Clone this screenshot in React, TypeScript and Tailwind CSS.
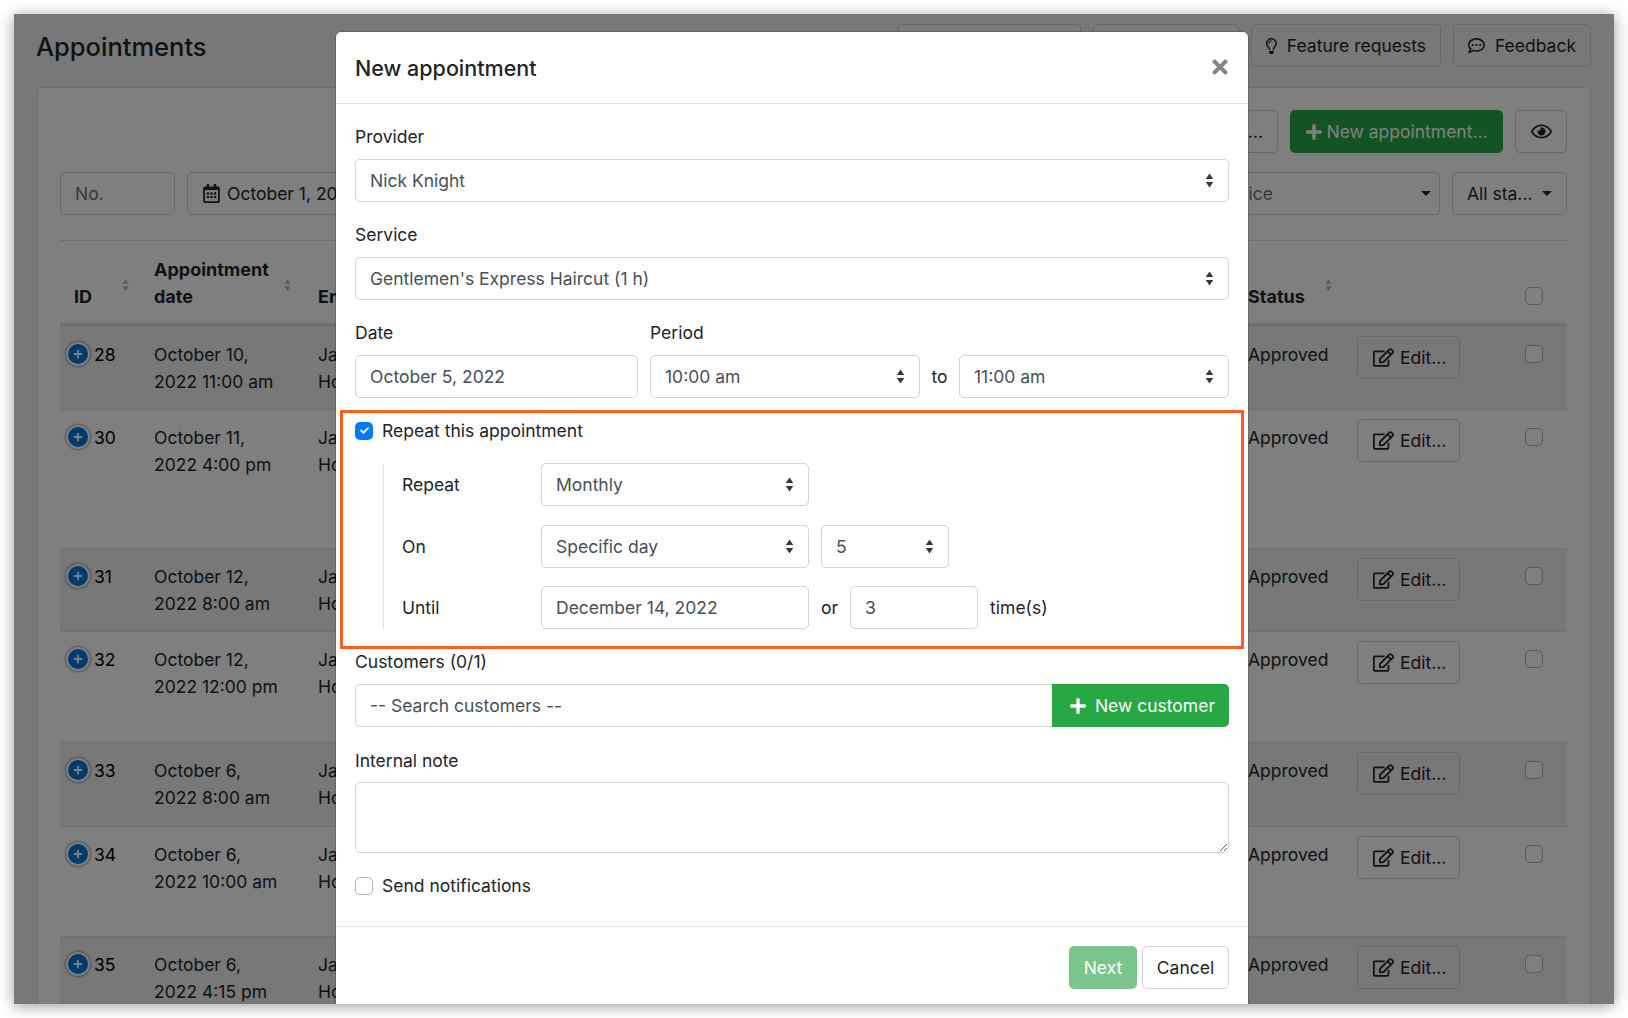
import { FaCheck, FaPlus, FaRegCalendarAlt, FaRegCommentDots, FaRegEdit, FaRegEye, FaRegLightbulb, FaTimes } from "react-icons/fa";

const rows = [
  { id: 28, l1: "October 10,", l2: "2022 11:00 am", h: "h-[83px]", striped: true },
  { id: 30, l1: "October 11,", l2: "2022 4:00 pm", h: "h-[139px]", striped: false },
  { id: 31, l1: "October 12,", l2: "2022 8:00 am", h: "h-[83px]", striped: true },
  { id: 32, l1: "October 12,", l2: "2022 12:00 pm", h: "h-[111px]", striped: false },
  { id: 33, l1: "October 6,", l2: "2022 8:00 am", h: "h-[84px]", striped: true },
  { id: 34, l1: "October 6,", l2: "2022 10:00 am", h: "h-[110px]", striped: false },
  { id: 35, l1: "October 6,", l2: "2022 4:15 pm", h: "h-[84px]", striped: true },
];

const Updown = () => (
  <svg viewBox="0 0 8 14" className="w-[9px] h-[15px] shrink-0 fill-[#343a40]">
    <path d="M4 0.5 7.5 5.5H0.5Z M4 13.5 0.5 8.5H7.5Z" />
  </svg>
);

const SortArrows = () => (
  <svg viewBox="0 0 8 14" className="w-[7px] h-[14px] fill-[#b5b5b5]">
    <path d="M4 0.5 7.5 5.5H0.5Z M4 13.5 0.5 8.5H7.5Z" />
  </svg>
);

const Caret = () => <span className="w-0 h-0 border-x-[5px] border-t-[5px] border-x-transparent border-t-[#212529]" />;

const Box = ({ children, className = "" }: { children: React.ReactNode; className?: string }) => (
  <div className={`h-[43px] shrink-0 flex items-center border border-[#ced4da] rounded-[5px] px-[14px] text-[#495057] bg-white ${className}`}>
    {children}
  </div>
);

const Select = ({ value, className = "" }: { value: string; className?: string }) => (
  <Box className={`justify-between ${className}`}>
    <span>{value}</span>
    <Updown />
  </Box>
);

const Label = ({ children }: { children: React.ReactNode }) => (
  <div className="h-[27px] leading-[27px] mb-[9px] text-[#212529]">{children}</div>
);

const PageButton = ({ children, className = "" }: { children: React.ReactNode; className?: string }) => (
  <div className={`h-[43px] shrink-0 flex items-center whitespace-nowrap rounded-[5px] border border-[#ced4da] px-[14px] text-[#212529] ${className}`}>
    {children}
  </div>
);

const CheckOff = ({ className = "" }: { className?: string }) => (
  <span className={`block w-[18px] h-[18px] shrink-0 rounded-[5px] border border-[#adb5bd] bg-white ${className}`} />
);

export default function App() {
  return (
    <div className="w-[1628px] h-[1018px] bg-white p-[14px] overflow-hidden text-[17.5px] leading-[27px] [font-family:Inter,'Liberation_Sans',sans-serif]">
      <div className="relative w-[1600px] h-[990px] overflow-hidden bg-[#f0f0f0] shadow-[0_2px_14px_rgba(0,0,0,0.4)]">
        {/* page behind the dialog */}
        <div className="flex items-start justify-between pl-[22px] pr-[23px] pt-[10px] h-[73px]">
          <h1 className="text-[25.5px] leading-[43px] mt-[1px] font-medium text-[#212529]">Appointments</h1>
          <div className="flex gap-[12px]">
            <PageButton className="w-[183px] bg-[#f8f8f8]">What's new</PageButton>
            <PageButton className="w-[146px] bg-[#f8f8f8]">Help</PageButton>
            <PageButton className="w-[190px] gap-[10px]">
              <FaRegLightbulb className="text-[20px]" />
              Feature requests
            </PageButton>
            <PageButton className="w-[138px] gap-[10px]">
              <FaRegCommentDots className="text-[21px]" />
              Feedback
            </PageButton>
          </div>
        </div>

        <div className="mx-[23px] h-[930px] bg-white border border-[#dfdfdf] rounded-t-[5px] pl-[22px] pr-[23px] pt-[22px]">
          <div className="flex justify-end gap-[12px]">
            <PageButton>Settings...</PageButton>
            <div className="h-[43px] w-[213px] flex items-center justify-center gap-[3px] rounded-[5px] bg-[#28a745] text-white">
              <FaPlus className="text-[18px]" />
              New appointment...
            </div>
            <PageButton className="w-[52px] justify-center !px-0">
              <FaRegEye className="text-[21px]" />
            </PageButton>
          </div>

          <div className="flex gap-[12px] mt-[19px]">
            <PageButton className="w-[115px] !text-[#6c757d]">No.</PageButton>
            <PageButton className="w-[300px] gap-[6px]">
              <FaRegCalendarAlt className="text-[19px]" />
              October 1, 2022
            </PageButton>
            <PageButton className="flex-1">All customers</PageButton>
            <PageButton className="w-[268px] justify-between !pr-[8px] !text-[#6c757d]">
              All service
              <Caret />
            </PageButton>
            <PageButton className="w-[115px] justify-between">
              All sta...
              <Caret />
            </PageButton>
          </div>

          <div className="mt-[25px] border-t border-[#dee2e6]">
            <div className="h-[85px] grid grid-cols-[94px_164px_930px_80px_197px_42px] text-[18px] font-bold text-[#212529] border-b-[3px] border-[#dee2e6] pt-[15px]">
              <div className="flex items-start justify-between pr-[25px] pl-[14px]">
                <span className="mt-[27px]">ID</span>
                <span className="mt-[22px] block"><SortArrows /></span>
              </div>
              <div className="flex items-start justify-between pr-[27px]">
                <span className="w-[120px]">Appointment date</span>
                <span className="mt-[22px] block"><SortArrows /></span>
              </div>
              <div className="mt-[27px]">Employee</div>
              <div className="mt-[27px] col-span-1">Status</div>
              <div className="mt-[22px] -ml-[3px]"><SortArrows /></div>
              <div className="mt-[27px] pt-[4px]"><CheckOff /></div>
            </div>

            {rows.map((r) => (
              <div key={r.id} className={`${r.h} grid grid-cols-[94px_164px_930px_109px_168px_42px] border-t border-[#dee2e6] first:border-t-0 ${r.striped ? "bg-[#f0f0f0]" : ""}`}>
                <div className="flex items-start gap-[4px] pl-[6px] pt-[14px]">
                  <span className="mt-[1px] w-[24px] h-[24px] shrink-0 flex items-center justify-center rounded-full bg-[#0275d8] border-2 border-white shadow-[0_0_3px_rgba(0,0,0,0.7)] text-white">
                    <FaPlus className="text-[10px]" />
                  </span>
                  {r.id}
                </div>
                <div className="pt-[14px] text-[#212529]">
                  <div>{r.l1}</div>
                  <div>{r.l2}</div>
                </div>
                <div className="pt-[14px] text-[#212529]">
                  <div>Ja</div>
                  <div>Ho</div>
                </div>
                <div className="pt-[14px] text-[#212529]">Approved</div>
                <div className="pt-[9px]">
                  <div className="h-[43px] w-[103px] flex items-center gap-[6px] pl-[15px] rounded-[5px] border border-[#ced4da] text-[#212529]">
                    <FaRegEdit className="text-[21px]" />
                    Edit...
                  </div>
                </div>
                <div className="pt-[18px]"><CheckOff /></div>
              </div>
            ))}
          </div>
        </div>

        {/* dialog */}
        <div className="absolute inset-0 bg-black/50" />
        <div className="absolute left-[322px] top-[18px] w-[912px] h-[972px] bg-white rounded-t-[5px] shadow-[0_0_2px_rgba(0,0,0,0.6)] text-[#212529]">
          <div className="h-[72px] flex items-center justify-between px-[19px] border-b border-[#dee2e6]">
            <h2 className="text-[21.5px] font-medium mt-[1px]">New appointment</h2>
            <FaTimes className="text-[22px] text-[#858585] mb-[2px] -mr-[2px]" />
          </div>

          <div className="px-[19px] pt-[19px]">
            <Label>Provider</Label>
            <Select value="Nick Knight" />

            <div className="mt-[19px]">
              <Label>Service</Label>
              <Select value="Gentlemen's Express Haircut (1 h)" />
            </div>

            <div className="mt-[19px] flex">
              <div className="w-[283px] mr-[12px]">
                <Label>Date</Label>
                <Box>October 5, 2022</Box>
              </div>
              <div>
                <Label>Period</Label>
                <div className="flex items-center">
                  <Select value="10:00 am" className="w-[270px]" />
                  <span className="w-[39px] text-center">to</span>
                  <Select value="11:00 am" className="w-[270px]" />
                </div>
              </div>
            </div>

            <div className="-mx-[15px] mt-[12px] h-[239px] border-[3px] border-[#fb5f1f] pl-[12px] pr-[12px] pt-[4px]">
              <div className="flex items-center gap-[9px] h-[27px]">
                <span className="w-[18px] h-[18px] flex items-center justify-center rounded-[5px] bg-[#007bff] text-white">
                  <FaCheck className="text-[9px]" />
                </span>
                Repeat this appointment
              </div>
              <div className="mt-[19px] ml-[28px] border-l border-[#dee2e6] pl-[18px] grid grid-cols-[139px_1fr] gap-y-[18.5px] items-center">
                <div>Repeat</div>
                <Select value="Monthly" className="w-[268px]" />
                <div>On</div>
                <div className="flex gap-[12px]">
                  <Select value="Specific day" className="w-[268px]" />
                  <Select value="5" className="w-[128px]" />
                </div>
                <div>Until</div>
                <div className="flex items-center gap-[12px]">
                  <Box className="w-[268px]">December 14, 2022</Box>
                  <span>or</span>
                  <Box className="w-[128px]">3</Box>
                  <span>time(s)</span>
                </div>
              </div>
            </div>

            <div className="-mt-px">
              <Label>Customers (0/1)</Label>
              <div className="flex h-[43px]">
                <Box className="flex-1 rounded-r-none border-r-0 text-[#858b91]">-- Search customers --</Box>
                <div className="w-[177px] flex items-center justify-end pr-[14px] gap-[8px] rounded-r-[5px] bg-[#28a745] text-white">
                  <FaPlus className="text-[18px]" />
                  New customer
                </div>
              </div>
            </div>

            <div className="mt-[20px]">
              <div className="h-[27px] leading-[27px] mb-[8px]">Internal note</div>
              <textarea readOnly className="block w-full h-[71px] border border-[#ced4da] rounded-[5px] outline-none" />
            </div>

            <div className="mt-[19px] flex items-center gap-[9px] h-[27px]">
              <CheckOff />
              Send notifications
            </div>
          </div>

          <div className="mt-[27px] border-t border-[#dee2e6] flex justify-end gap-[5px] px-[19px] pt-[19px]">
            <div className="h-[43px] w-[68px] flex items-center justify-center rounded-[5px] bg-[#7cc68d] text-white">Next</div>
            <div className="h-[43px] w-[87px] flex items-center justify-center rounded-[5px] border border-[#ced4da]">Cancel</div>
          </div>
        </div>
      </div>
    </div>
  );
}
